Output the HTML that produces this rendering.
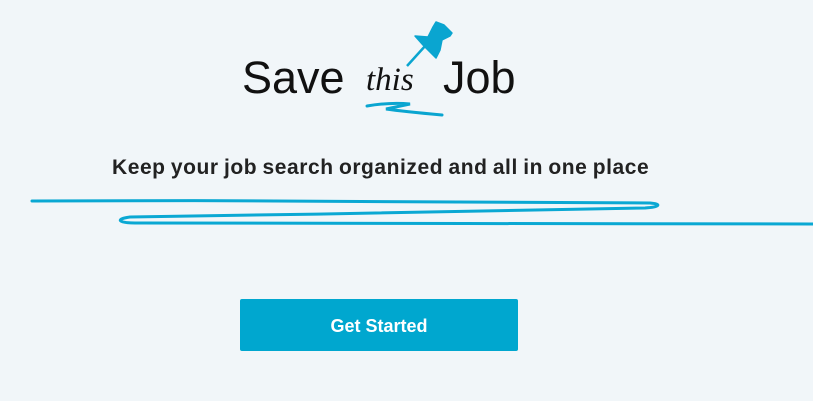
<!DOCTYPE html>
<html><head><style>
html,body{margin:0;padding:0;width:813px;height:401px;background:#f1f6f9;overflow:hidden;position:relative;font-family:"Liberation Sans",sans-serif}
.t{position:absolute;top:52px;font-size:45px;color:#111;line-height:52px}
.sub{position:absolute;left:112px;top:156px;font-size:21px;font-weight:bold;color:#222;letter-spacing:0.55px;word-spacing:-1px;white-space:nowrap}
.btn{position:absolute;left:240px;top:299px;width:278px;height:52px;background:#00a7cf;border-radius:2px;color:#fff;font-weight:bold;font-size:18px;text-align:center;line-height:54px}
</style></head><body>
<div class="t" style="left:242px">Save</div>
<div class="t" style="left:443px">Job</div>
<div style="position:absolute;left:366px;top:62px;font-family:'Liberation Serif',serif;font-style:italic;font-size:33px;color:#111">this</div>
<svg width="813" height="401" style="position:absolute;left:0;top:0">
<path d="M367 106 C385 103 400 103 410 104 L386 109 C400 111 420 113 442 115" fill="none" stroke="#0aa5d0" stroke-width="3" stroke-linecap="round"/>
<path d="M407 66 L426 45" stroke="#0aa5d0" stroke-width="2.5"/>
<path d="M415 36 L428 37 L433 27 L436 22 L444 25 L452 33 L450 36 L442 40 L440 50 L436 58 L430 52 L423 45 Z" fill="#0aa5d0" stroke="#0aa5d0" stroke-width="1.5" stroke-linejoin="round"/>
<path d="M32 201 C250 200 500 201 650 203 C662 204 660 207 645 208 C500 212 300 214 130 217 C115 219 118 223 135 223 C350 224 600 223 813 224" fill="none" stroke="#0aa8d3" stroke-width="3" stroke-linecap="round"/>
</svg>
<div class="sub">Keep your job search organized and all in one place</div>
<div class="btn">Get Started</div>
</body></html>
